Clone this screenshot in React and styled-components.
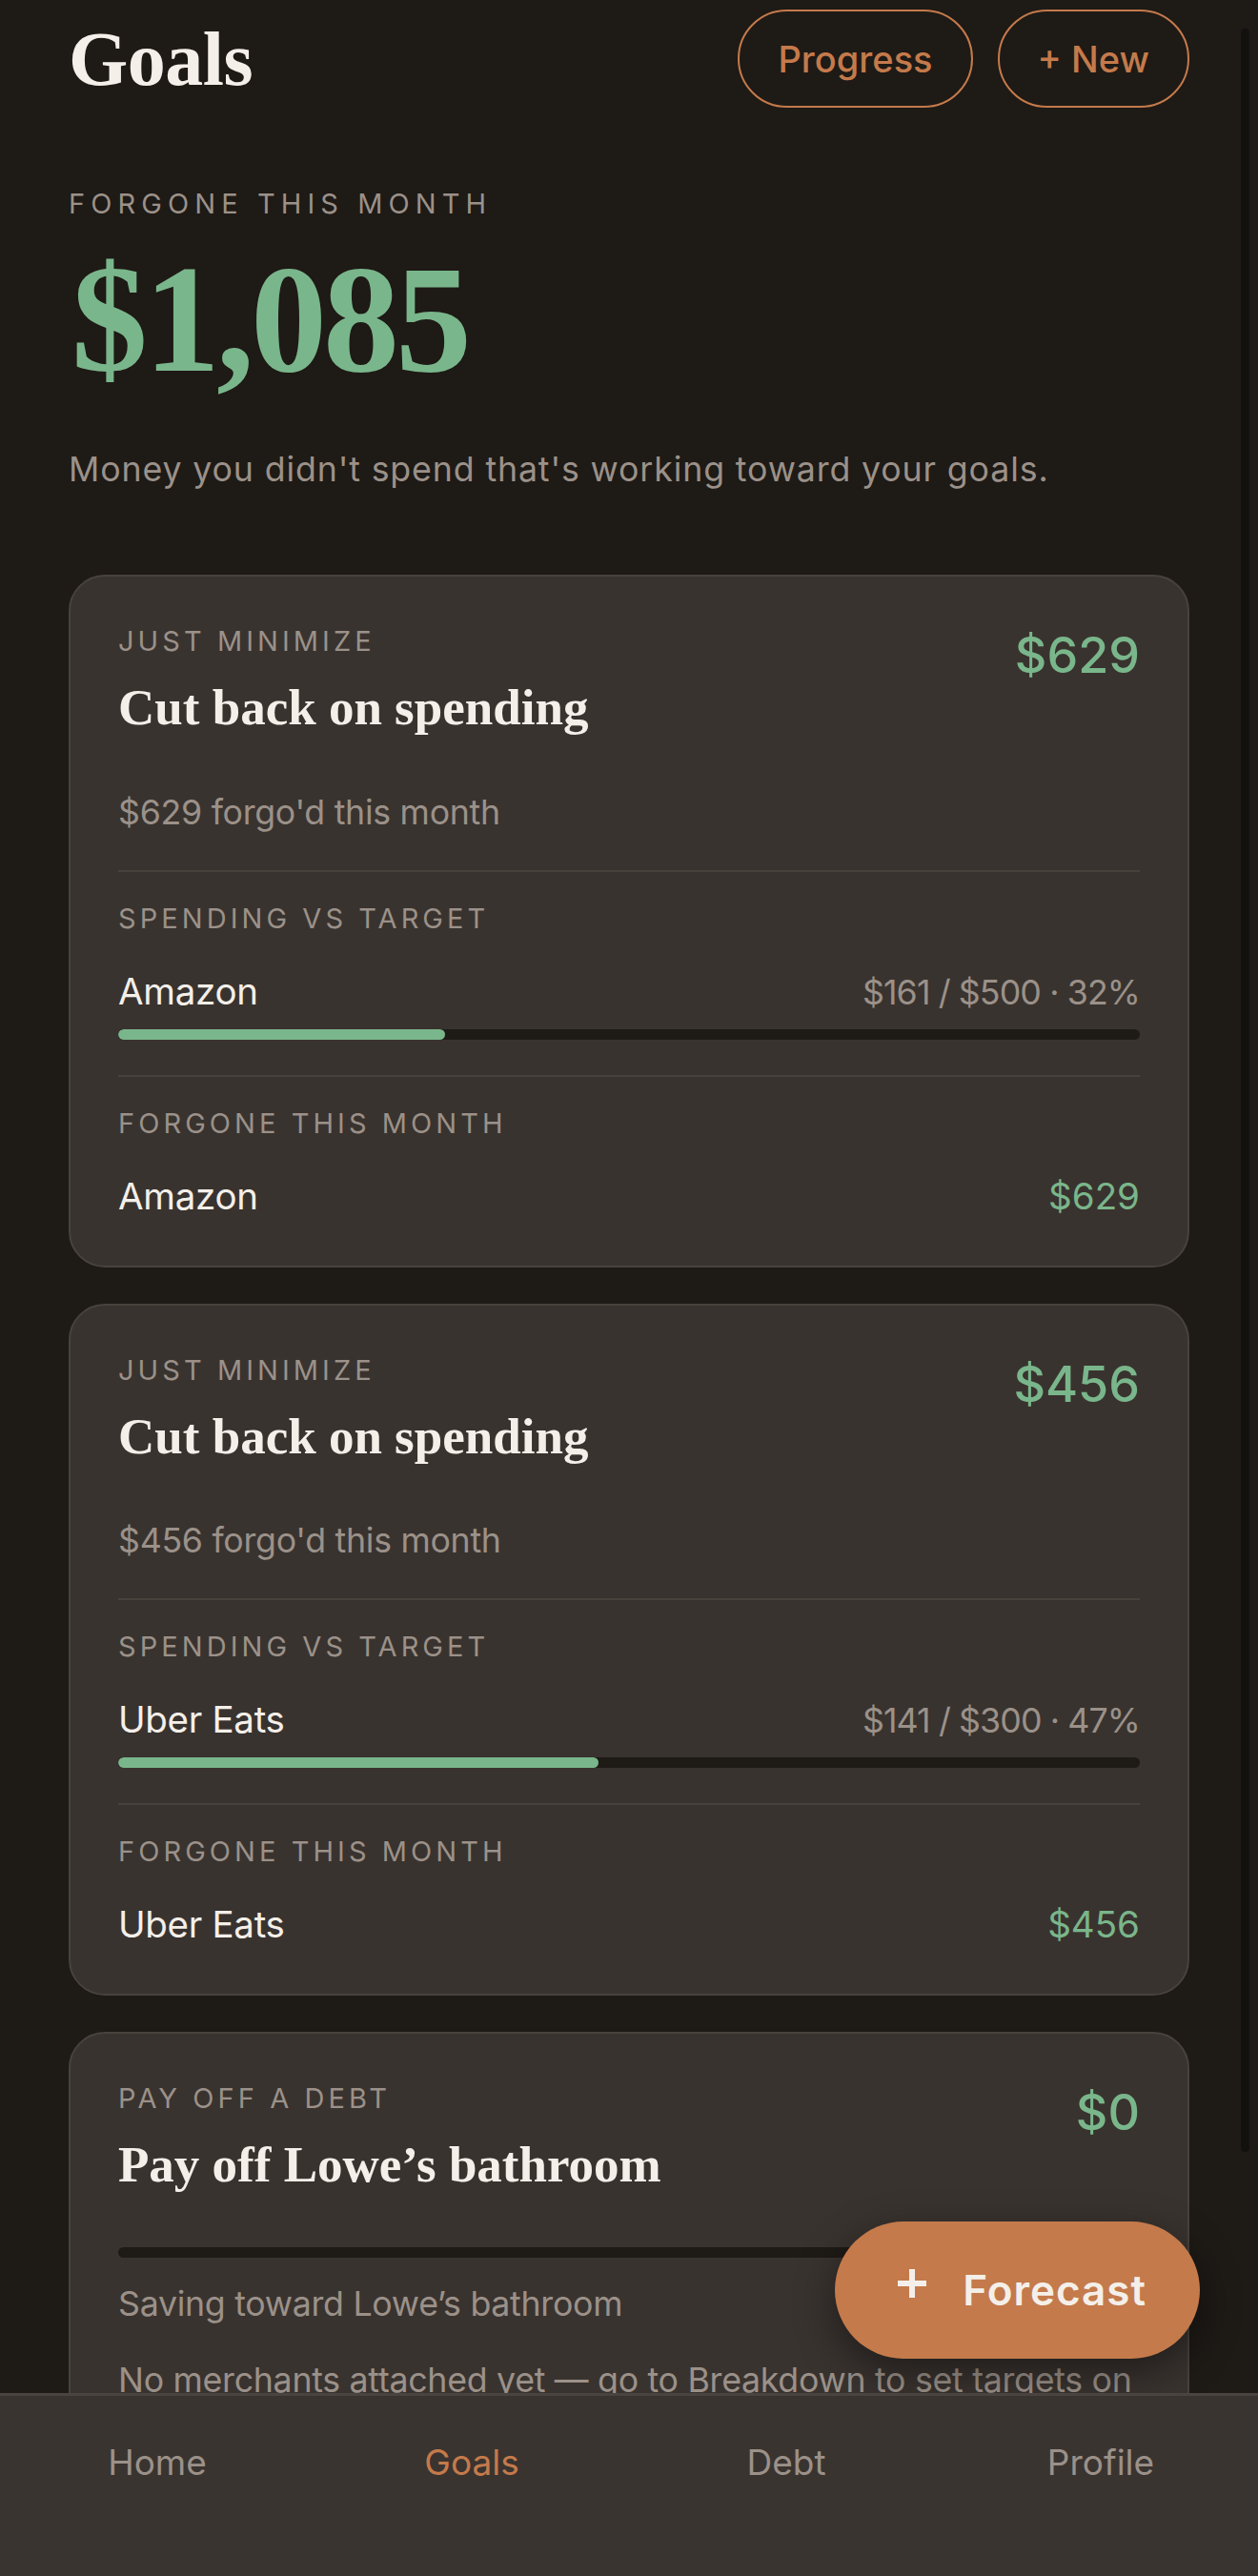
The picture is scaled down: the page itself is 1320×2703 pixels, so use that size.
import React from 'react';
import styled, { createGlobalStyle } from 'styled-components';

const sans = `"Inter", "Noto Sans", "DejaVu Sans", sans-serif`;
const serif = `"Liberation Serif", "Times New Roman", serif`;

const NAV_H = 192;

const C = {
  bg: '#1e1a16',
  card: '#39332f',
  line: '#48423d',
  cream: '#f4efe9',
  muted: '#9b9189',
  green: '#7ab68b',
  orange: '#c47a4b',
  nav: '#3a3430',
};

const GlobalStyle = createGlobalStyle`
  html, body { margin: 0; padding: 0; height: 100%; background: ${C.bg}; }
  #root { height: 100%; }
  *, *::before, *::after { box-sizing: border-box; }
`;

const Shell = styled.div`
  position: relative;
  height: 100vh;
  overflow: hidden;
  background: ${C.bg};
  font-family: ${sans};
`;

const Scroller = styled.main`
  height: 100%;
  overflow-y: auto;
  overflow-x: hidden;
  scrollbar-width: none;
  &::-webkit-scrollbar { display: none; }
`;

/* overlay scroll indicator drawn over the content's right edge */
const ScrollThumb = styled.div`
  position: absolute;
  top: 30px;
  right: 9px;
  width: 9px;
  height: 2228px;
  border-radius: 5px;
  background: #131110;
  pointer-events: none;
`;

const Page = styled.div`
  padding: 10px 72px ${NAV_H + 240}px;
`;

const Header = styled.header`
  display: flex;
  align-items: center;
  justify-content: space-between;
`;

const Title = styled.h1`
  margin: 0;
  font-family: ${serif};
  font-weight: 700;
  font-size: 80px;
  line-height: 1;
  letter-spacing: -0.5px;
  color: ${C.cream};
`;

const Actions = styled.div`
  display: flex;
  gap: 26px;
`;

const PillButton = styled.button`
  height: 103px;
  padding: 0 40px;
  border: 2px solid ${C.orange};
  border-radius: 999px;
  background: transparent;
  color: ${C.orange};
  font-family: ${sans};
  font-size: 38px;
  font-weight: 500;
  line-height: 1;
`;

const Eyebrow = styled.div`
  margin-top: 83px;
  font-size: 29px;
  line-height: 36px;
  letter-spacing: 0.21em;
  text-transform: uppercase;
  color: ${C.muted};
`;

const BigAmount = styled.div`
  margin-top: 23px;
  padding-left: 3px;
  font-family: ${serif};
  font-weight: 700;
  font-size: 160px;
  line-height: 1;
  letter-spacing: -4px;
  color: ${C.green};
`;

const Lede = styled.p`
  margin: 52px 0 0;
  font-size: 35.75px;
  line-height: 50px;
  letter-spacing: 0.85px;
  color: ${C.muted};
`;

const CardStack = styled.div`
  margin-top: 86px;
  display: flex;
  flex-direction: column;
  gap: 38px;
`;

const Card = styled.article`
  background: ${C.card};
  border: 2px solid ${C.line};
  border-radius: 38px;
  padding: 50px 50px 48px;
`;

const CardHead = styled.div`
  display: flex;
  justify-content: space-between;
  align-items: flex-start;
  gap: 24px;
`;

const Kicker = styled.div`
  font-size: 29px;
  line-height: 36px;
  letter-spacing: 0.14em;
  text-transform: uppercase;
  color: ${C.muted};
`;

const CardTitle = styled.h2`
  margin: 20px 0 0;
  font-family: ${serif};
  font-weight: 700;
  font-size: 53px;
  line-height: 63.6px;
  color: ${C.cream};
`;

const HeadAmount = styled.div`
  margin-top: 2px;
  font-size: 52px;
  font-weight: 500;
  line-height: 62px;
  color: ${C.green};
`;

const Note = styled.p`
  margin: ${(p) => p.$gap}px 0 0;
  font-size: 35.75px;
  line-height: 50px;
  letter-spacing: -0.3px;
  color: ${C.muted};
`;

const Section = styled.section`
  margin-top: ${(p) => p.$gap}px;
  padding-top: 31px;
  border-top: 2px solid ${C.line};
`;

const Row = styled.div`
  margin-top: 33px;
  display: flex;
  justify-content: space-between;
  align-items: baseline;
  line-height: 50px;
`;

const RowName = styled.span`
  font-size: 38.5px;
  letter-spacing: -0.3px;
  color: ${C.cream};
`;

const RowValue = styled.span`
  font-size: ${(p) => (p.$tone === 'green' ? '38.5px' : '35.75px')};
  letter-spacing: ${(p) => (p.$tone === 'green' ? '0' : '-0.9px')};
  color: ${(p) => (p.$tone === 'green' ? C.green : C.muted)};
`;

const Track = styled.div`
  margin-top: ${(p) => p.$gap}px;
  height: 11px;
  border-radius: 6px;
  background: ${C.bg};
  overflow: hidden;
`;

const Fill = styled.div`
  height: 100%;
  border-radius: 6px;
  background: ${C.green};
`;

const Fab = styled.button`
  position: absolute;
  right: 61px;
  bottom: 228px;
  height: 144px;
  padding: 0 56px 0 64px;
  display: flex;
  align-items: center;
  gap: 36px;
  border: 0;
  border-radius: 72px;
  background: ${C.orange};
  color: ${C.cream};
  font-family: ${sans};
  font-size: 44px;
  font-weight: 600;
  letter-spacing: 1px;
  line-height: 1;
  box-shadow: 0 14px 44px rgba(0, 0, 0, 0.45);
`;

const FabIcon = styled.svg`
  width: 34px;
  height: 34px;
  margin-bottom: 14px;
  flex: none;
`;

const Nav = styled.nav`
  position: absolute;
  left: 0;
  right: 0;
  bottom: 0;
  height: ${NAV_H}px;
  padding-top: 48px;
  background: ${C.nav};
  border-top: 3px solid #4a4440;
  display: grid;
  grid-template-columns: repeat(4, 1fr);
  align-items: start;
`;

const NavItem = styled.a`
  text-align: center;
  font-size: 37px;
  line-height: 44px;
  text-decoration: none;
  color: ${(p) => (p.$active ? C.orange : C.muted)};
`;

const minimizeGoals = [
  { amount: '$629', merchant: 'Amazon', spent: '$161', target: '$500', pct: 32 },
  { amount: '$456', merchant: 'Uber Eats', spent: '$141', target: '$300', pct: 47 },
];

function MinimizeCard({ goal }) {
  return (
    <Card>
      <CardHead>
        <div>
          <Kicker>Just minimize</Kicker>
          <CardTitle>Cut back on spending</CardTitle>
        </div>
        <HeadAmount>{goal.amount}</HeadAmount>
      </CardHead>
      <Note $gap={52}>{goal.amount} forgo'd this month</Note>
      <Section $gap={36}>
        <Kicker>Spending vs target</Kicker>
        <Row>
          <RowName>{goal.merchant}</RowName>
          <RowValue>{`${goal.spent} / ${goal.target} · ${goal.pct}%`}</RowValue>
        </Row>
        <Track $gap={14}>
          <Fill style={{ width: `${goal.pct}%` }} />
        </Track>
      </Section>
      <Section $gap={37}>
        <Kicker>Forgone this month</Kicker>
        <Row>
          <RowName>{goal.merchant}</RowName>
          <RowValue $tone="green">{goal.amount}</RowValue>
        </Row>
      </Section>
    </Card>
  );
}

function DebtCard() {
  return (
    <Card>
      <CardHead>
        <div>
          <Kicker>Pay off a debt</Kicker>
          <CardTitle>Pay off Lowe’s bathroom</CardTitle>
        </div>
        <HeadAmount>$0</HeadAmount>
      </CardHead>
      <Track $gap={54}>
        <Fill style={{ width: '0%' }} />
      </Track>
      <Note $gap={23}>Saving toward Lowe’s bathroom</Note>
      <Note $gap={30}>No merchants attached yet — go to Breakdown to set targets on</Note>
    </Card>
  );
}

export default function App() {
  return (
    <>
      <GlobalStyle />
      <Shell>
        <Scroller>
          <Page>
            <Header>
              <Title>Goals</Title>
              <Actions>
                <PillButton>Progress</PillButton>
                <PillButton>+ New</PillButton>
              </Actions>
            </Header>
            <Eyebrow>Forgone this month</Eyebrow>
            <BigAmount>$1,085</BigAmount>
            <Lede>Money you didn't spend that's working toward your goals.</Lede>
            <CardStack>
              {minimizeGoals.map((g) => (
                <MinimizeCard key={g.merchant} goal={g} />
              ))}
              <DebtCard />
            </CardStack>
          </Page>
        </Scroller>
        <ScrollThumb />
        <Fab>
          <FabIcon viewBox="0 0 34 34" aria-hidden="true">
            <path d="M17 2v30M2 17h30" stroke={C.cream} strokeWidth="6" fill="none" />
          </FabIcon>
          Forecast
        </Fab>
        <Nav>
          <NavItem>Home</NavItem>
          <NavItem $active>Goals</NavItem>
          <NavItem>Debt</NavItem>
          <NavItem>Profile</NavItem>
        </Nav>
      </Shell>
    </>
  );
}
